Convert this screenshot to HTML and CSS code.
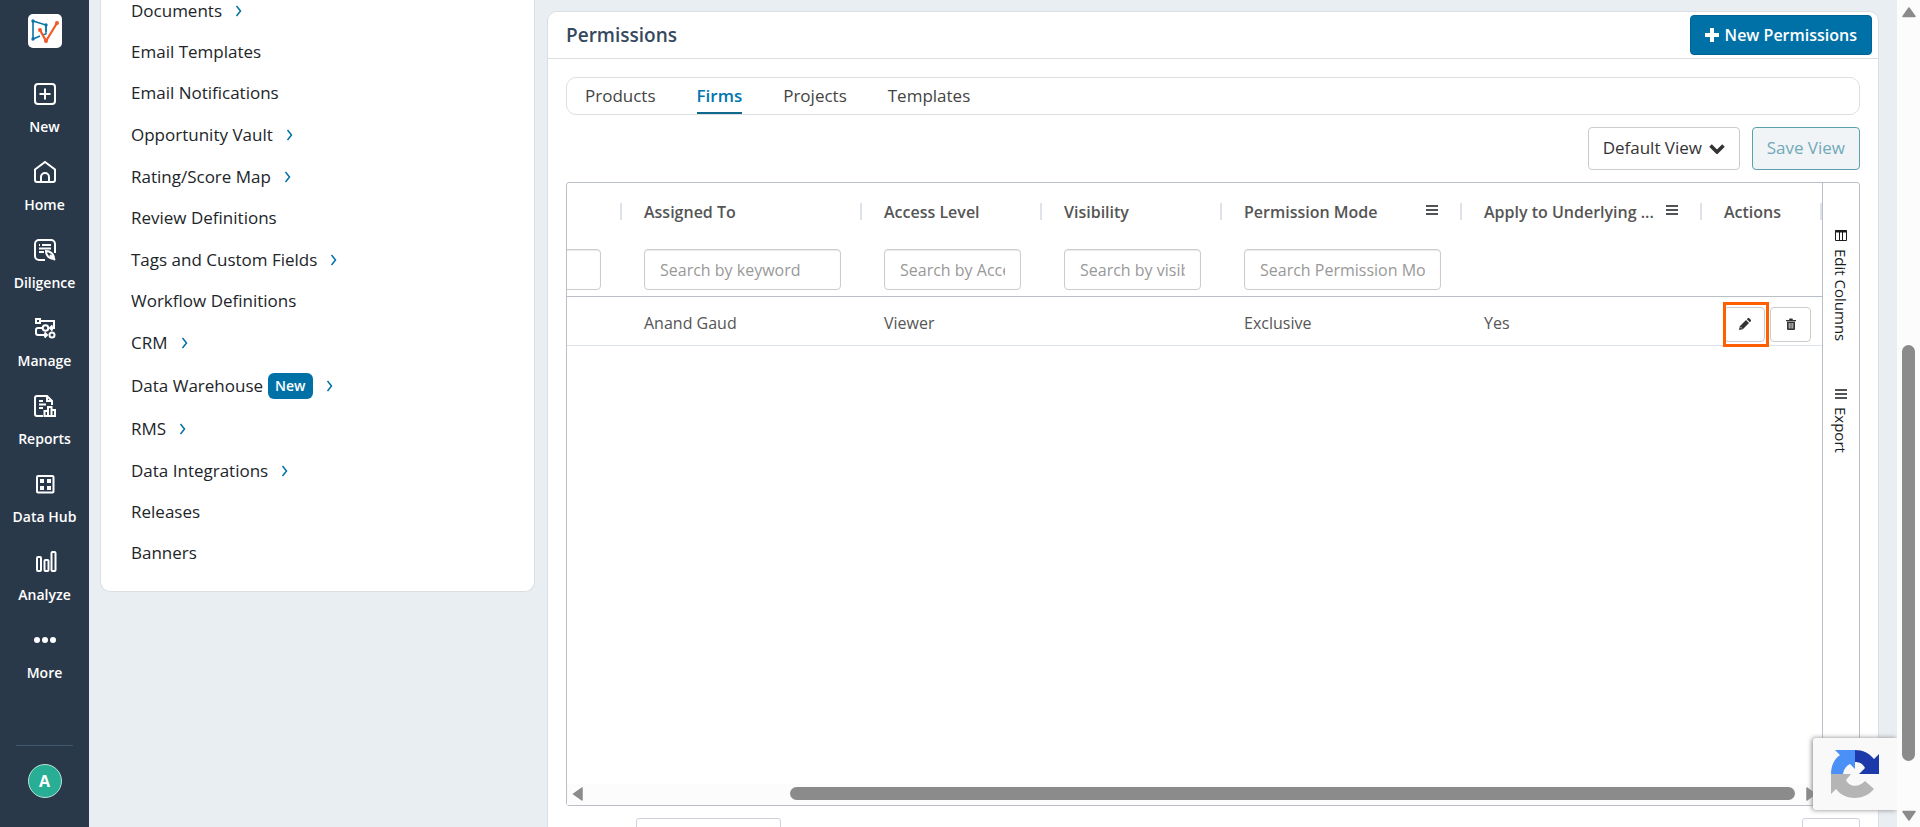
FILE: index.html
```
<!DOCTYPE html>
<html lang="en">
<head>
  <meta charset="UTF-8">
  <meta name="viewport" content="width=device-width, initial-scale=1">
  <title>Permissions</title>
  <link rel="stylesheet" href="styles.css">
</head>
<body>

  <div class="app">
    <nav class="sidebar" aria-label="Main">
      <a href="#" class="logo" aria-label="Dashboard">
        <svg viewBox="0 0 34 34" width="34" height="34" fill="none">
          <path d="M5 7 L18 11 V18 M5 7 V25 L12 22" stroke="#0b74a8" stroke-width="1.6"/>
          <path d="M18 11 V20 L14 21" stroke="#0b74a8" stroke-width="1.4"/>
          <path d="M12 16 L18 27 L29 9" stroke="#f0592a" stroke-width="2.2"/>
          <g fill="#0b74a8"><circle cx="5" cy="7" r="1.7"/><circle cx="18" cy="11" r="1.7"/><circle cx="5" cy="25" r="1.7"/></g>
          <g fill="#f0592a"><circle cx="12" cy="16" r="2"/><circle cx="18" cy="27" r="2"/><circle cx="29" cy="9" r="2"/></g>
        </svg>
      </a>

      <ul class="sidebar-nav">
        <li><a href="#">
          <svg viewBox="0 0 24 24"><rect x="2" y="2" width="20" height="20" rx="3"/><path d="M12 6.500v11M6.500 12h11"/></svg>
          New</a></li>
        <li><a href="#">
          <svg viewBox="0 0 24 24"><path d="M2 9.500 12 2l10 7.500V20a2 2 0 0 1-2 2H4a2 2 0 0 1-2-2z"/><path d="M8 22v-5a4 4 0 0 1 8 0v5"/></svg>
          Home</a></li>
        <li><a href="#">
          <svg viewBox="0 0 24 24"><path d="M12 22H6a4 4 0 0 1-4-4V6a4 4 0 0 1 4-4h12a4 4 0 0 1 4 4v9"/><path d="M6 7h1M9 7h9M6 10.500h12M6 14h5"/><path d="M13 13c4 0 8 3 8 7.500-4.500 1-8-3-8-7.500zM17 17l5 5"/></svg>
          Diligence</a></li>
        <li><a href="#">
          <svg viewBox="0 0 24 24"><rect x="3" y="3" width="4" height="4"/><circle cx="12.500" cy="12" r="2.800"/><circle cx="19" cy="19" r="2.500"/><path d="M7 5h14v7h-4M19.500 9.500 17 12l2.500 2.500M9.500 12H5a2 2 0 0 0-2 2v3a2 2 0 0 0 2 2h8M11.500 16.500 14 19l-2.500 2.500"/></svg>
          Manage</a></li>
        <li><a href="#">
          <svg viewBox="0 0 24 24"><path d="M10 22H4a2 2 0 0 1-2-2V4a2 2 0 0 1 2-2h10l5 5v4"/><path d="M14 2v5h5M6 7h4M6 10.500h7M6 14h4"/><path d="M11.500 22v-5h3.500v5M15 22v-9h3.500v9M18.500 22v-6H22v6zM10.500 22H22"/></svg>
          Reports</a></li>
        <li><a href="#">
          <svg viewBox="0 0 24 24"><rect x="4" y="4" width="16.500" height="16.500" rx="1"/><path class="solid" d="M7 7h4v4H7zM14 7h4v4h-4zM7 14h4v4H7zM14 14h4v4h-4z"/></svg>
          Data Hub</a></li>
        <li><a href="#">
          <svg viewBox="0 0 24 24"><rect x="4" y="7" width="4" height="14" rx="1"/><rect x="11.500" y="10" width="4" height="11" rx="1"/><rect x="18.500" y="2" width="4" height="19" rx="1"/></svg>
          Analyze</a></li>
        <li><a href="#">
          <svg viewBox="0 0 24 24"><g class="solid"><circle cx="4" cy="12" r="3"/><circle cx="12" cy="12" r="3"/><circle cx="20" cy="12" r="3"/></g></svg>
          More</a></li>
      </ul>

      <div class="sidebar-foot">
        <button type="button" class="avatar">A</button>
      </div>
    </nav>

    <main class="content">
      <ul class="settings-menu">
        <li class="has-sub"><a href="#">Documents</a><svg class="chev" viewBox="0 0 8 12"><path d="M1.500 1l4 5-4 5"/></svg></li>
        <li><a href="#">Email Templates</a></li>
        <li><a href="#">Email Notifications</a></li>
        <li class="has-sub"><a href="#">Opportunity Vault</a><svg class="chev" viewBox="0 0 8 12"><path d="M1.500 1l4 5-4 5"/></svg></li>
        <li class="has-sub"><a href="#">Rating/Score Map</a><svg class="chev" viewBox="0 0 8 12"><path d="M1.500 1l4 5-4 5"/></svg></li>
        <li><a href="#">Review Definitions</a></li>
        <li class="has-sub"><a href="#">Tags and Custom Fields</a><svg class="chev" viewBox="0 0 8 12"><path d="M1.500 1l4 5-4 5"/></svg></li>
        <li><a href="#">Workflow Definitions</a></li>
        <li class="has-sub"><a href="#">CRM</a><svg class="chev" viewBox="0 0 8 12"><path d="M1.500 1l4 5-4 5"/></svg></li>
        <li class="has-sub has-badge"><a href="#">Data Warehouse</a><span class="badge">New</span><svg class="chev" viewBox="0 0 8 12"><path d="M1.500 1l4 5-4 5"/></svg></li>
        <li class="has-sub"><a href="#">RMS</a><svg class="chev" viewBox="0 0 8 12"><path d="M1.500 1l4 5-4 5"/></svg></li>
        <li class="has-sub"><a href="#">Data Integrations</a><svg class="chev" viewBox="0 0 8 12"><path d="M1.500 1l4 5-4 5"/></svg></li>
        <li><a href="#">Releases</a></li>
        <li><a href="#">Banners</a></li>
      </ul>

      <section class="card">
        <header class="card-header">
          <h1>Permissions</h1>
          <button type="button" class="btn btn-primary">
            <svg viewBox="0 0 14 14" width="14" height="14"><path d="M5 0h4v5h5v4H9v5H5V9H0V5h5z" fill="#fff"/></svg>
            New Permissions
          </button>
        </header>

        <div class="card-body">
          <nav class="tabs" aria-label="Permission type">
            <a href="#">Products</a>
            <a href="#" class="active">Firms</a>
            <a href="#">Projects</a>
            <a href="#">Templates</a>
          </nav>

          <div class="toolbar">
            <div class="view-select">
              <select aria-label="View">
                <option>Default View</option>
              </select>
              <svg viewBox="0 0 16 10" width="16" height="10"><path d="M1.500 1.500 8 8l6.500-6.500" fill="none" stroke="#333" stroke-width="3.600"/></svg>
            </div>
            <button type="button" class="btn btn-save" disabled>Save View</button>
          </div>

          <div class="grid">
            <div class="grid-main">
              <div class="grid-viewport">
                <table>
                  <colgroup>
                    <col class="col-wide"><col class="col-wide"><col class="col-mid"><col class="col-mid"><col class="col-wide"><col class="col-wide"><col class="col-small">
                  </colgroup>
                  <thead>
                    <tr class="titles">
                      <th></th>
                      <th>Assigned To</th>
                      <th>Access Level</th>
                      <th>Visibility</th>
                      <th><div class="th-menu"><span>Permission Mode</span><svg viewBox="0 0 12 10" width="12" height="10"><path d="M0 1h12M0 5h12M0 9h12"/></svg></div></th>
                      <th><div class="th-menu"><span>Apply to Underlying ...</span><svg viewBox="0 0 12 10" width="12" height="10"><path d="M0 1h12M0 5h12M0 9h12"/></svg></div></th>
                      <th>Actions</th>
                    </tr>
                    <tr class="filters">
                      <td><input type="text" aria-label="Filter"></td>
                      <td><input type="text" placeholder="Search by keyword" aria-label="Search by keyword"></td>
                      <td><input type="text" placeholder="Search by Access Level" aria-label="Search by Access Level"></td>
                      <td><input type="text" placeholder="Search by visibility" aria-label="Search by visibility"></td>
                      <td><input type="text" placeholder="Search Permission Mode" aria-label="Search Permission Mode"></td>
                      <td></td>
                      <td></td>
                    </tr>
                  </thead>
                  <tbody>
                    <tr>
                      <td></td>
                      <td>Anand Gaud</td>
                      <td>Viewer</td>
                      <td></td>
                      <td>Exclusive</td>
                      <td>Yes</td>
                      <td>
                        <div class="actions">
                          <button type="button" class="icon-btn highlighted" aria-label="Edit">
                            <svg viewBox="0 0 12 12" width="12" height="12"><path d="M0 12l.8-3.800L7 2l3 3-6.200 6.200zM7.800 1.200 9 0h1L12 2v1l-1.200 1.200z" fill="#333"/><path d="M1.500 9l1.500 1.500" stroke="#fff" stroke-width=".8"/></svg>
                          </button>
                          <button type="button" class="icon-btn" aria-label="Delete">
                            <svg viewBox="0 0 12 12" width="12" height="12"><path d="M1 2h3l.6-1.500h2.800L8 2h3v1.300H1zM2 3.800h8V11a1 1 0 0 1-1 1H3a1 1 0 0 1-1-1z" fill="#333"/><path d="M4.200 5v5.500M6 5v5.500M7.800 5v5.500" stroke="#fff" stroke-width=".8"/></svg>
                          </button>
                        </div>
                      </td>
                    </tr>
                  </tbody>
                </table>
              </div>
              <div class="h-scroll" aria-hidden="true">
                <svg viewBox="0 0 12 14" width="12" height="14"><path d="M10 1 1.500 7 10 13z"/></svg>
                <div class="h-track"><div class="h-thumb"></div></div>
                <svg viewBox="0 0 12 14" width="12" height="14"><path d="M2 1l8.500 6L2 13z"/></svg>
              </div>
            </div>
            <div class="grid-side">
              <button type="button">
                <svg viewBox="0 0 12 11" width="12" height="11" fill="none" stroke="#181d1f"><path d="M.5.5h11v10H.5zM4.500 2v8M7.500 2v8"/><path d="M0 1.500h12" stroke-width="2"/></svg>
                <span>Edit Columns</span>
              </button>
              <button type="button">
                <svg viewBox="0 0 12 10" width="12" height="10" fill="none" stroke="#181d1f"><path d="M0 1h12M0 5h12M0 9h12" stroke-width="1.300"/></svg>
                <span>Export</span>
              </button>
            </div>
          </div>

          <div class="pager">
            <select class="page-size" aria-label="Page size"></select>
            <input type="text" class="page-number" aria-label="Page">
          </div>
        </div>
      </section>
    </main>

    <div class="v-scroll" aria-hidden="true">
      <svg viewBox="0 0 16 12" width="16" height="12"><path d="M8 2l6 8.500H2z"/></svg>
      <div class="v-track"><div class="v-thumb"></div></div>
      <svg viewBox="0 0 16 12" width="16" height="12"><path d="M8 10l6-8.500H2z"/></svg>
    </div>

    <div class="captcha">
      <svg viewBox="0 0 48 48" width="48" height="48">
        <path d="M24 0v19l-5-5c-4 2-6 5-7 10H0C0 16 3 9 9 5L4 0z" fill="#4a90f7"/>
        <path d="M24 0c8 0 14 3 19 9l5-5v20H28l6-6c-2-4-5-6-10-6z" fill="#1c3aa9"/>
        <path d="M0 24h20l-5 6c3 7 13 8 19 1l9 8C33 51 14 51 5 39l-5 5z" fill="#b5b5b5"/>
      </svg>
    </div>
  </div>

</body>
</html>
```
FILE: styles.css
```
* {
  box-sizing: border-box;
}

body {
  margin: 0;
  font-family: 'Open Sans', 'Noto Sans', sans-serif;
  font-size: 16px;
  color: #212529;
  background-color: #e9eef3;
}

a {
  color: inherit;
  text-decoration: none;
}

ul {
  list-style: none;
  margin: 0;
  padding: 0;
}

button,
input,
select {
  font: inherit;
  color: inherit;
}

.app {
  display: flex;
  height: 100vh;
  overflow: hidden;
}

/* Sidebar */
.sidebar {
  display: flex;
  flex-direction: column;
  align-items: center;
  flex: 0 0 89px;
  padding: 14px 0 29px;
  background-color: #2a394a;
  color: #fff;
}

.logo {
  width: 34px;
  height: 34px;
  margin-bottom: 28px;
  border-radius: 5px;
  background-color: #fff;
}

.sidebar-nav a {
  display: flex;
  flex-direction: column;
  align-items: center;
  gap: 11px;
  height: 78px;
  padding-top: 6px;
  font-size: 14px;
  font-weight: 600;
  line-height: 20px;
}

.sidebar-nav svg {
  width: 24px;
  height: 24px;
  fill: none;
  stroke: #fff;
  stroke-width: 2;
}

.sidebar-nav .solid {
  fill: #fff;
  stroke: none;
}

.sidebar-foot {
  width: 57px;
  margin-top: auto;
  padding-top: 18px;
  border-top: 1px solid #41556c;
  text-align: center;
}

.avatar {
  display: block;
  width: 34px;
  height: 34px;
  margin: 0 auto;
  padding: 0;
  border: 1px solid #b9e2d8;
  border-radius: 50%;
  background-color: #27ae94;
  color: #fff;
  font-weight: 700;
}

/* Content */
.content {
  display: flex;
  flex: 1;
  gap: 12px;
  min-width: 0;
  padding: 0 18px 0 11px;
}

.settings-menu {
  flex: 0 0 435px;
  align-self: flex-start;
  margin-top: -24px;
  padding: 14px 30px 17px;
  border: 1px solid #dcdfe2;
  border-top: 0;
  border-radius: 10px;
  background-color: #fff;
  font-size: 17px;
}

.settings-menu li {
  display: flex;
  align-items: center;
  height: 41px;
  padding-bottom: 1px;
  line-height: 24px;
}

.settings-menu .has-sub {
  height: 42px;
  padding-bottom: 0;
}

.settings-menu .has-badge {
  height: 44px;
}

.chev {
  width: 8px;
  height: 12px;
  margin-left: 13px;
  fill: none;
  stroke: #0071a6;
  stroke-width: 1.5;
}

.badge {
  margin-left: 5px;
  padding: 3px 7px;
  border-radius: 6px;
  background-color: #0071a6;
  color: #fff;
  font-size: 14px;
  font-weight: 600;
  line-height: 20px;
}

.card {
  flex: 1;
  min-width: 0;
  height: 900px;
  margin-top: 11px;
  border: 1px solid #dcdfe2;
  border-radius: 10px;
  background-color: #fff;
}

.card-header {
  display: flex;
  align-items: center;
  justify-content: space-between;
  height: 47px;
  padding: 0 6px 0 18px;
  border-bottom: 1px solid #dcdfe2;
}

.card-header h1 {
  margin: 0;
  color: #34495e;
  font-size: 19px;
  font-weight: 600;
}

.btn {
  border-radius: 4px;
  line-height: 24px;
  white-space: nowrap;
}

.btn-primary {
  display: flex;
  align-items: center;
  gap: 6px;
  height: 40px;
  padding: 0 14px;
  border: 1px solid #006494;
  background-color: #0071a6;
  color: #fff;
  font-weight: 600;
}

.card-body {
  padding: 18px;
}

.tabs {
  display: flex;
  gap: 41px;
  height: 38px;
  padding: 0 18px;
  border: 1px solid #dcdfe2;
  border-radius: 10px;
  color: #444;
  font-size: 17px;
}

.tabs a {
  height: 36px;
  line-height: 36px;
}

.tabs .active {
  border-bottom: 2px solid #10688c;
  color: #0076ad;
  font-weight: 600;
}

.toolbar {
  display: flex;
  justify-content: flex-end;
  gap: 12px;
  margin: 12px 0;
  font-size: 17px;
}

.view-select {
  position: relative;
}

.view-select select {
  width: 152px;
  height: 43px;
  padding: 0 32px 2px 14px;
  border: 1px solid #ccc;
  border-radius: 4px;
  background-color: #fff;
  color: #333;
  appearance: none;
}

.view-select svg {
  position: absolute;
  top: 17px;
  right: 15px;
  pointer-events: none;
}

.btn-save {
  height: 43px;
  padding: 0 14px 2px;
  border: 1px solid #5c9fb0;
  background-color: #f0f4f7;
  color: #72a9b8;
}

/* Grid */
.grid {
  display: flex;
  height: 624px;
  border: 1px solid #babfc7;
  border-radius: 3px;
}

.grid-main {
  display: flex;
  flex: 1;
  flex-direction: column;
  min-width: 0;
}

/* scrolled to the last column */
.grid-viewport {
  display: flex;
  flex: 1;
  justify-content: flex-end;
  align-items: flex-start;
  overflow: hidden;
}

.grid table {
  flex: none;
  width: 1440px;
  border-collapse: separate;
  border-spacing: 0;
  table-layout: fixed;
  color: #555;
}

.col-wide {
  width: 240px;
}

.col-mid {
  width: 180px;
}

.col-small {
  width: 120px;
}

.grid th,
.grid td {
  padding: 0 21px 0 22px;
  text-align: left;
  white-space: nowrap;
}

.titles th {
  height: 58px;
  background: linear-gradient(#dde2eb, #dde2eb) no-repeat right 20px / 2px 17px;
  font-weight: 600;
}

.th-menu {
  display: flex;
  align-items: center;
  justify-content: space-between;
}

.th-menu svg {
  flex: none;
  margin: 0 3px 5px 0;
  stroke: #181d1f;
  stroke-width: 1.3;
}

.filters td {
  height: 56px;
  border-bottom: 1px solid #babfc7;
}

.filters input {
  display: block;
  width: 100%;
  height: 41px;
  margin-top: 2px;
  padding: 0 15px;
  border: 1px solid #ccc;
  border-radius: 4px;
  box-shadow: inset 0 1px 1px rgba(0, 0, 0, .08);
}

.filters input::placeholder {
  color: #999;
}

.grid tbody td {
  height: 49px;
  padding-top: 4px;
  border-bottom: 1px solid #dde2eb;
}

.grid tbody td:last-child {
  padding-top: 6px;
  padding-right: 0;
}

.actions {
  display: flex;
  gap: 5px;
}

.icon-btn {
  display: flex;
  align-items: center;
  justify-content: center;
  position: relative;
  width: 41px;
  height: 35px;
  padding: 0;
  border: 1px solid #ccc;
  border-radius: 4px;
  background-color: #fff;
}

.highlighted::after {
  content: '';
  position: absolute;
  inset: -6px -5px -6px -2px;
  border: 3px solid #ff5f00;
}

.grid-side {
  display: flex;
  flex-direction: column;
  align-items: center;
  flex: 0 0 37px;
  gap: 48px;
  padding-top: 47px;
  border-left: 1px solid #babfc7;
}

.grid-side button {
  display: flex;
  flex-direction: column;
  align-items: center;
  gap: 8px;
  padding: 0;
  border: 0;
  background: none;
  color: #181d1f;
  font-size: 15px;
}

.grid-side span {
  writing-mode: vertical-rl;
  line-height: 18px;
}

/* Scrollbars */
.h-scroll,
.v-scroll {
  display: flex;
  align-items: center;
  background-color: #fcfcfc;
}

.h-scroll svg,
.v-scroll svg {
  fill: #8b8b8b;
  stroke: #8b8b8b;
  stroke-width: 1.5;
  stroke-linejoin: round;
}

.h-scroll {
  height: 21px;
  padding: 0 5px 2px;
}

.h-track {
  flex: 1;
  padding: 0 10px 0 206px;
}

.h-thumb {
  height: 13px;
  border-radius: 7px;
  background-color: #8b8b8b;
}

.v-scroll {
  flex: 0 0 23px;
  flex-direction: column;
  padding: 6px 0 5px;
}

.v-track {
  display: flex;
  flex: 1;
  flex-direction: column;
  justify-content: flex-end;
  padding-bottom: 49px;
}

.v-thumb {
  width: 13px;
  height: 56%;
  border-radius: 7px;
  background-color: #8b8b8b;
}

/* Pager */
.pager {
  display: flex;
  justify-content: space-between;
  margin-top: 12px;
  padding-left: 70px;
}

.page-size,
.page-number {
  height: 40px;
  border: 1px solid #d0d0dd;
  border-radius: 3px;
  background-color: #fff;
  appearance: none;
}

.page-size {
  width: 145px;
}

.page-number {
  width: 58px;
}

.captcha {
  position: fixed;
  right: 23px;
  bottom: 17px;
  width: 84px;
  height: 72px;
  padding: 12px 18px;
  border-radius: 3px 0 0 3px;
  background-color: #f9f9f9;
  box-shadow: -1px 0 5px #888;
  clip-path: inset(-8px 0 -8px -8px);
}
```
